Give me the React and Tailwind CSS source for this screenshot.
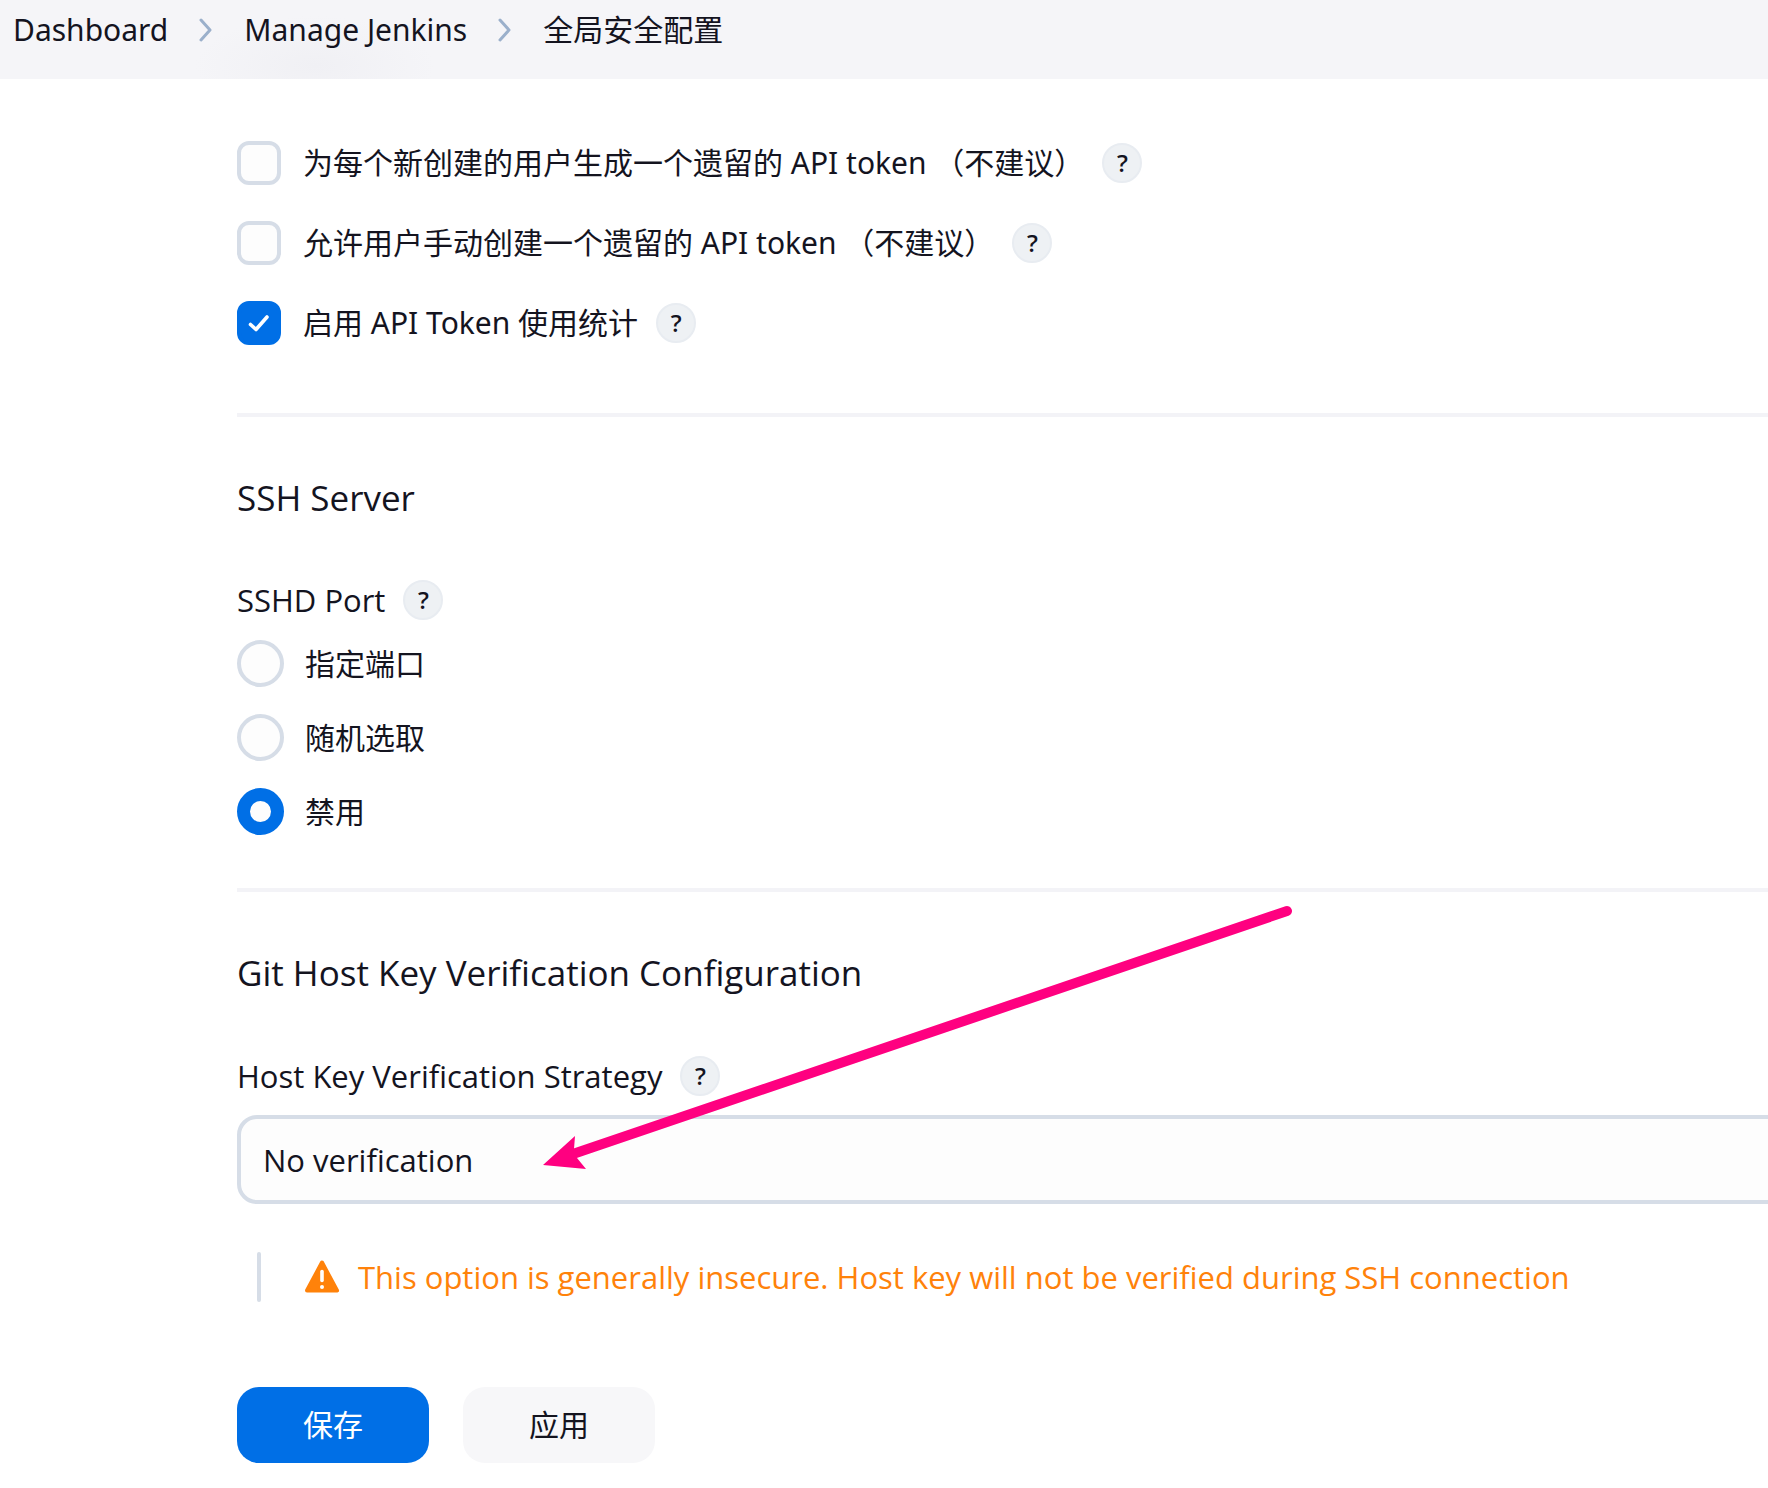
import React, { useState } from "react";

function Chevron() {
  return (
    <svg className="h-6 w-4 shrink-0" viewBox="0 0 16 24" fill="none" stroke="#9bb0cb" strokeWidth="3" strokeLinecap="round" strokeLinejoin="round" aria-hidden="true">
      <path d="M3 2 L12 12 L3 22" />
    </svg>
  );
}

function Help({ topic }) {
  return (
    <button
      type="button"
      aria-label={`Help: ${topic}`}
      className="flex size-10 shrink-0 items-center justify-center rounded-full border-2 border-[#e8ecf1] bg-[#eef1f4] font-['Open_Sans',sans-serif] text-2xl leading-none font-semibold text-[#14141f]"
    >
      ?
    </button>
  );
}

function Check({ id, label, defaultChecked }) {
  return (
    <div className="flex items-center gap-[18px]">
      <div className="flex items-center gap-[22px]">
        <span className="grid">
          <input
            id={id}
            type="checkbox"
            defaultChecked={defaultChecked}
            className="peer col-start-1 row-start-1 size-11 appearance-none rounded-xl border-4 border-[#d6dde7] bg-[#fdfdfd] checked:border-[#006fe6] checked:bg-[#006fe6]"
          />
          <svg className="pointer-events-none invisible col-start-1 row-start-1 size-11 peer-checked:visible" viewBox="0 0 44 44" fill="none" stroke="#fff" strokeWidth="3.6" strokeLinecap="round" strokeLinejoin="round" aria-hidden="true">
            <path d="M13.5 23.5 L19 28.5 L30 16" />
          </svg>
        </span>
        <label htmlFor={id} className="whitespace-pre">{label}</label>
      </div>
      <Help topic={label} />
    </div>
  );
}

const ports = ["指定端口", "随机选取", "禁用"];

export default function App() {
  const [port, setPort] = useState("禁用");
  return (
    <div className="min-h-screen overflow-hidden bg-white font-['Noto_Sans','Noto_Sans_CJK_SC',sans-serif] text-[30px] leading-10 text-[#14141f]">
      <header className="h-[79px] bg-[#f5f5f8] bg-[radial-gradient(ellipse_120px_50px_at_315px_66px,#f0f0f4,#f5f5f8)] pt-[10px] pl-[13px]">
        <nav aria-label="Breadcrumb" className="flex items-center gap-[30px] whitespace-nowrap">
          <a href="#dashboard">Dashboard</a>
          <Chevron />
          <a href="#manage">Manage Jenkins</a>
          <Chevron />
          <a href="#security">全局安全配置</a>
        </nav>
      </header>

      <main className="relative pt-[62px] pl-[237px]">
        <section className="flex flex-col gap-9">
          <Check id="legacy-new" label="为每个新创建的用户生成一个遗留的 API token （不建议）" />
          <Check id="legacy-manual" label="允许用户手动创建一个遗留的 API token （不建议）" />
          <Check id="stats" label="启用 API Token 使用统计" defaultChecked />
        </section>

        <hr className="mt-[68px] border-t-4 border-[#f3f3f7]" />

        <section>
          <h2 className="mt-[57px] font-['Open_Sans',sans-serif] text-[35px] leading-[48px]">SSH Server</h2>
          <fieldset className="mt-[58px]">
            <legend className="flex items-center gap-[18px] font-['Open_Sans',sans-serif] text-[31px]">
              SSHD Port
              <Help topic="SSHD Port" />
            </legend>
            <div className="mt-5 flex flex-col gap-[27px]">
              {ports.map((name) => (
                <label key={name} className="flex items-center gap-[21px]">
                  <input
                    type="radio"
                    name="port"
                    checked={port === name}
                    onChange={() => setPort(name)}
                    className="size-[47px] appearance-none rounded-full border-4 border-[#d6dde7] bg-[#fdfdfd] checked:border-[13px] checked:border-[#006fe6]"
                  />
                  {name}
                </label>
              ))}
            </div>
          </fieldset>
        </section>

        <hr className="mt-[53px] border-t-4 border-[#f3f3f7]" />

        <section className="font-['Open_Sans',sans-serif] text-[31px]">
          <h2 className="mt-[57px] text-[35px] leading-[48px]">Git Host Key Verification Configuration</h2>
          <div className="mt-[59px] flex items-center gap-[18px]">
            <label htmlFor="strategy">Host Key Verification Strategy</label>
            <Help topic="Host Key Verification Strategy" />
          </div>
          <div className="-mr-12 mt-[19px]">
            <select id="strategy" className="h-[89px] w-full appearance-none rounded-[20px] border-4 border-[#d6dde7] bg-[#fdfdfd] px-[22px]">
              <option>No verification</option>
            </select>
          </div>
          <div className="mt-12 ml-5 flex h-[50px] items-center">
            <span className="h-full w-1 rounded-sm bg-[#d6dde7]" />
            <svg className="ml-[43px] h-9 w-9 shrink-0" viewBox="0 0 36 36" aria-hidden="true">
              <path d="M18 3.5 L33 31.5 H3 Z" fill="#ff820a" stroke="#ff820a" strokeWidth="4" strokeLinejoin="round" />
              <path d="M18 12.5 V21.5" stroke="#fff" strokeWidth="3.6" strokeLinecap="round" />
              <circle cx="18" cy="28" r="2" fill="#fff" />
            </svg>
            <p className="ml-[18px] whitespace-nowrap text-[#ff820a]">This option is generally insecure. Host key will not be verified during SSH connection</p>
          </div>
        </section>

        <div className="mt-[85px] flex gap-[34px] pb-6">
          <button type="button" className="h-[76px] w-48 rounded-[22px] bg-[#006fe6] text-white">保存</button>
          <button type="button" className="h-[76px] w-48 rounded-[22px] bg-[#f7f7f9]">应用</button>
        </div>

        <svg className="pointer-events-none absolute top-[826px] left-[540px] h-[270px] w-[760px]" viewBox="540 905 760 270" aria-hidden="true">
          <path d="M1287 911 L570 1155" stroke="#ff0080" strokeWidth="10" strokeLinecap="round" />
          <path d="M543 1165 L575 1136 L574 1149 L577 1158 L586 1169 Z" fill="#ff0080" />
        </svg>
      </main>
    </div>
  );
}
